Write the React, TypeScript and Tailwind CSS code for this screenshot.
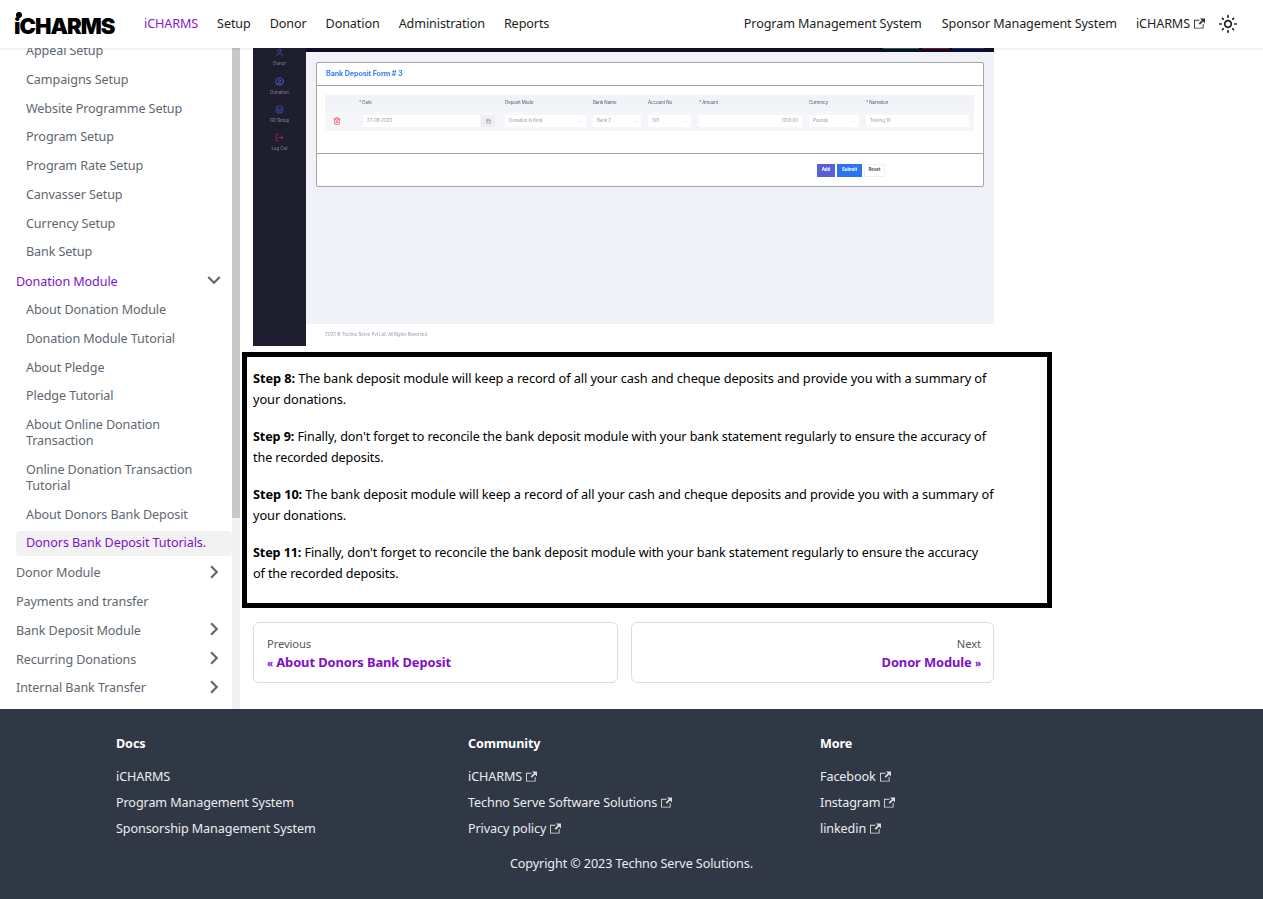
import { Calendar, ChevronDown, CircleUser, Layers, LogOut, Trash2, User } from "lucide-react";

const ExternalIcon = ({ className = "" }: { className?: string }) => (
  <svg viewBox="0 0 24 24" className={`w-[11px] h-[11px] inline-block ml-[4px] -mt-[2px] fill-current opacity-90 ${className}`}>
    <path d="M21 13v10h-21v-19h12v2h-10v15h17v-8h2zm3-12h-10.988l4.035 4-6.977 7.07 2.828 2.828 6.977-7.07 4.125 4.172v-11z" />
  </svg>
);

const SunIcon = () => (
  <svg viewBox="0 0 24 24" className="w-5 h-5 fill-[#1c1e21]">
    <path d="M12,9c1.65,0,3,1.35,3,3s-1.35,3-3,3s-3-1.35-3-3S10.35,9,12,9 M12,7c-2.76,0-5,2.24-5,5s2.24,5,5,5s5-2.24,5-5 S14.76,7,12,7L12,7z M2,13l2,0c0.55,0,1-0.45,1-1s-0.45-1-1-1l-2,0c-0.55,0-1,0.45-1,1S1.45,13,2,13z M20,13l2,0c0.55,0,1-0.45,1-1 s-0.45-1-1-1l-2,0c-0.55,0-1,0.45-1,1S19.45,13,20,13z M11,2v2c0,0.55,0.45,1,1,1s1-0.45,1-1V2c0-0.55-0.45-1-1-1S11,1.45,11,2z M11,20v2c0,0.55,0.45,1,1,1s1-0.45,1-1v-2c0-0.55-0.45-1-1-1C11.45,19,11,19.45,11,20z M5.99,4.58c-0.39-0.39-1.03-0.39-1.41,0 c-0.39,0.39-0.39,1.03,0,1.41l1.06,1.06c0.39,0.39,1.03,0.39,1.41,0s0.39-1.03,0-1.41L5.99,4.58z M18.36,16.95 c-0.39-0.39-1.03-0.39-1.41,0c-0.39,0.39-0.39,1.03,0,1.41l1.06,1.06c0.39,0.39,1.03,0.39,1.41,0c0.39-0.39,0.39-1.03,0-1.41 L18.36,16.95z M19.42,5.99c0.39-0.39,0.39-1.03,0-1.41c-0.39-0.39-1.03-0.39-1.41,0l-1.06,1.06c-0.39,0.39-0.39,1.03,0,1.41 s1.03,0.39,1.41,0L19.42,5.99z M7.05,18.36c0.39-0.39,0.39-1.03,0-1.41c-0.39-0.39-1.03-0.39-1.41,0l-1.06,1.06 c-0.39,0.39-0.39,1.03,0,1.41s1.03,0.39,1.41,0L7.05,18.36z" />
  </svg>
);

const Chevron = ({ down = false }: { down?: boolean }) => (
  <svg viewBox="0 0 24 24" className={`w-[26px] h-[26px] fill-[#65676b] ${down ? "rotate-180" : "rotate-90"}`}>
    <path d="M7.41 15.41L12 10.83l4.59 4.58L18 14l-6-6-6 6z" />
  </svg>
);

const sidebarTop = [
  "Appeal Setup",
  "Campaigns Setup",
  "Website Programme Setup",
  "Program Setup",
  "Program Rate Setup",
  "Canvasser Setup",
  "Currency Setup",
  "Bank Setup",
];

const donationLinks = [
  "About Donation Module",
  "Donation Module Tutorial",
  "About Pledge",
  "Pledge Tutorial",
  "About Online Donation Transaction",
  "Online Donation Transaction Tutorial",
  "About Donors Bank Deposit",
];

const SubLink = ({ label, active = false }: { label: string; active?: boolean }) => (
  <div
    className={`mt-[3.2px] pl-[10px] pr-3 py-[4.8px] leading-4 rounded ${
      active ? "bg-[#f2f2f2] text-[#7e10c9]" : "text-[#606770]"
    }`}
  >
    {label}
  </div>
);

const Category = ({ label, chevron = true }: { label?: string; chevron?: boolean }) => (
  <div className="mt-[3.2px] h-[25.6px] flex items-center justify-between text-[#606770]">
    <span className="pt-[3px]">{label}</span>
    {chevron && (
      <span className="mr-[5px] mb-[1px]">
        <Chevron />
      </span>
    )}
  </div>
);

const Sidebar = () => (
  <aside className="w-[240px] h-full flex shrink-0 overflow-hidden">
    <div className="w-[232px] h-full overflow-hidden pl-4">
      <div className="-mt-[13px]">
        {sidebarTop.map((s) => (
          <SubLink key={s} label={s} />
        ))}
        <div className="mt-[3.2px] h-[25.6px] flex items-center justify-between text-[#7e10c9]">
          <span className="pt-[3px]">Donation Module</span>
          <span className="mr-[5px] mb-[2px]">
            <Chevron down />
          </span>
        </div>
        {donationLinks.map((s) => (
          <SubLink key={s} label={s} />
        ))}
        <SubLink label="Donors Bank Deposit Tutorials." active />
        <Category label="Donor Module" />
        <Category label="Payments and transfer" chevron={false} />
        <Category label="Bank Deposit Module" />
        <Category label="Recurring Donations" />
        <Category label="Internal Bank Transfer" />
        <Category />
      </div>
    </div>
    <div className="w-2 h-full bg-[#f1f1f1]">
      <div className="h-[470px] bg-[#c8c8c8]" />
    </div>
  </aside>
);

const FormSelect = ({ text, mr, kind = "select" }: { text: string; mr: string; kind?: "select" | "input" | "amount" }) => (
  <div className={`${mr} h-[12px] bg-white rounded-[1px] flex items-center justify-between px-[4px] text-[#9a9aa5]`}>
    <span className={kind === "amount" ? "ml-auto" : ""}>{text}</span>
    {kind === "select" && <ChevronDown className="w-[3px] h-[3px]" />}
  </div>
);

const columns = "grid grid-cols-[34px_146px_88px_55px_51px_110px_57px_108px]";

// the screenshot inside the article
const DepositShot = () => (
  <div className="w-[741px] h-[298px] flex flex-col bg-white font-['Inter',sans-serif] blur-[0.3px]">
    <div className="flex flex-1">
      <div className="w-[54px] bg-[#1e1e2e] flex flex-col items-center text-[4.5px] text-[#8c8c9c]">
        <User className="w-[9px] h-[9px] text-[#4a4fc4]" />
        <span className="mt-[3px] leading-[7px]">Donor</span>
        <CircleUser className="w-[9px] h-[9px] text-[#5560e0] mt-[9.5px]" />
        <span className="mt-[3px] leading-[7px]">Donation</span>
        <Layers className="w-[9px] h-[9px] text-[#4a55d0] mt-[9.5px]" />
        <span className="mt-[3px] leading-[7px]">GD Setup</span>
        <LogOut className="w-[9px] h-[9px] text-[#b8285c] mt-[9px]" />
        <span className="mt-[3px] leading-[7px]">Log Out</span>
      </div>
      <div className="flex-1 flex flex-col">
        <div className="h-1 shrink-0 bg-[#100e24] flex justify-end pr-[10px] gap-[3px]">
          <div className="w-9 h-[1px] bg-[#1c6b5c]" />
          <div className="w-[27px] h-[1px] bg-[#7a1f3d]" />
          <div className="w-8 h-[1px] bg-[#23308a]" />
        </div>
        <div className="h-[272px] bg-[#f0f2f8] pt-[10px] pl-[10px] pr-[10px]">
          <div className="w-[668px] h-[125px] bg-white border border-[#a5a5a8] rounded-[2px] flex flex-col">
            <div className="h-[23px] border-b border-[#a5a5a8] pl-[9px] flex items-center text-[7.2px] font-bold text-[#3b82f6]">
              Bank Deposit Form # 3
            </div>
            <div className="h-[68px] border-b border-[#a5a5a8] pt-[9px] pl-[8px] text-[4.5px]">
              <div className={`${columns} w-[649px] h-[16px] bg-[#f2f3f8] items-center text-[#55555f]`}>
                <span />
                <span>* Date</span>
                <span>Deposit Mode</span>
                <span>Bank Name</span>
                <span>Account No</span>
                <span>* Amount</span>
                <span>Currency</span>
                <span>* Narration</span>
              </div>
              <div className={`${columns} w-[649px] h-[20px] bg-[#f5f6fa] items-center`}>
                <Trash2 className="w-2 h-2 ml-2 text-[#ef3a4a]" />
                <div className="flex ml-1 gap-[1px]">
                  <div className="w-[117px] h-[12px] bg-white flex items-center px-[4px] text-[#9a9aa5]">27-09-2023</div>
                  <div className="w-[14px] h-[12px] bg-[#eeeff3] flex items-center justify-center">
                    <Calendar className="w-[5px] h-[5px] text-[#777]" />
                  </div>
                </div>
                <FormSelect text="Donation In Kind" mr="mr-[7px]" />
                <FormSelect text="Bank 2" mr="mr-[7px]" />
                <FormSelect text="301" mr="mr-2" />
                <FormSelect text="1200.00" mr="mr-[7px]" kind="amount" />
                <FormSelect text="Pounds" mr="mr-[7px]" />
                <FormSelect text="Testing 10" mr="mr-[5px]" kind="input" />
              </div>
            </div>
            <div className="flex-1 flex items-center justify-end pr-[98px] gap-[1px] text-[4.5px] font-bold">
              <div className="w-[18px] h-[13px] bg-[#5a5fd6] text-white flex items-center justify-center">Add</div>
              <div className="w-[25px] h-[13px] ml-[1px] bg-[#2b74f0] text-white flex items-center justify-center">Submit</div>
              <div className="w-[21px] h-[13px] ml-[1px] bg-white border border-[#f0f0f0] text-[#555] flex items-center justify-center">Reset</div>
            </div>
          </div>
        </div>
        <div className="flex-1 flex items-center pl-[19px] text-[4.5px] text-[#9a9aa5]">
          2023 © Techno Serve Pvt Ltd. All Rights Reserved
        </div>
      </div>
    </div>
  </div>
);

// sizes differ per step so the lines break where the picture breaks them
const steps = [
  ["Step 8:", "The bank deposit module will keep a record of all your cash and cheque deposits and provide you with a summary of your donations.", "text-[12.8px]"],
  ["Step 9:", "Finally, don't forget to reconcile the bank deposit module with your bank statement regularly to ensure the accuracy of the recorded deposits.", "text-[12.6px]"],
  ["Step 10:", "The bank deposit module will keep a record of all your cash and cheque deposits and provide you with a summary of your donations.", "text-[12.8px]"],
  ["Step 11:", "Finally, don't forget to reconcile the bank deposit module with your bank statement regularly to ensure the accuracy of the recorded deposits.", "text-[12.6px] max-w-[730px]"],
];

const footerCols = [
  { x: "Docs", links: [["iCHARMS", false], ["Program Management System", false], ["Sponsorship Management System", false]] },
  { x: "Community", links: [["iCHARMS", true], ["Techno Serve Software Solutions", true], ["Privacy policy", true]] },
  { x: "More", links: [["Facebook", true], ["Instagram", true], ["linkedin", true]] },
] as const;

export default function App() {
  return (
    <div className="w-[1263px] h-[899px] overflow-hidden flex flex-col bg-white text-[12.6px] tracking-[-0.1px] text-[#1c1e21] font-['Noto_Sans',sans-serif]">
      {/* Navbar */}
      <header className="h-12 shrink-0 relative z-10 bg-white shadow-[0_1px_2px_rgba(0,0,0,0.1)] flex items-center pl-[14px] pr-[25px]">
        <div className="relative w-[101px] font-['Inter',sans-serif] font-black text-[22px] leading-none tracking-[-1px] text-black mt-[4px]">
          iCHARMS
          <span className="absolute left-[2px] -top-[3px] w-[6px] h-[6px] rounded-full bg-black" />
        </div>
        <nav className="ml-[29px] flex gap-[19px]">
          <span className="text-[#8a14d8]">iCHARMS</span>
          <span>Setup</span>
          <span>Donor</span>
          <span>Donation</span>
          <span>Administration</span>
          <span>Reports</span>
        </nav>
        <div className="ml-auto flex items-center">
          <span>Program Management System</span>
          <span className="ml-5">Sponsor Management System</span>
          <span className="ml-[19px]">
            iCHARMS
            <ExternalIcon className="opacity-80" />
          </span>
          <span className="ml-[13px]">
            <SunIcon />
          </span>
        </div>
      </header>

      <div className="flex flex-1 min-h-0">
        <Sidebar />
        <main className="flex-1 min-w-0 pl-[13px]">
          <DepositShot />
          <div className="-ml-[11px] mt-[6px] w-[810px] h-[256px] border-[5px] border-black pl-[6px] pt-[11px]">
            <div className="w-[741px]">
              {steps.map(([label, text, size]) => (
                <p key={label} className={`mb-4 leading-[21px] text-black ${size}`}>
                  <b>{label}</b> {text}
                </p>
              ))}
            </div>
          </div>
          <div className="mt-[14px] w-[741px] flex gap-[13px]">
            <div className="flex-1 h-[61px] border border-[#dadde1] rounded-md px-[13px] pt-[12px]">
              <div className="text-[11.2px] leading-[18px] text-[#525860]">Previous</div>
              <div className="font-bold text-[12.9px] leading-[19px] text-[#7e10c9]">
                <span className="text-[10px]">«</span> About Donors Bank Deposit
              </div>
            </div>
            <div className="flex-1 h-[61px] border border-[#dadde1] rounded-md pl-[13px] pr-3 pt-[12px] text-right">
              <div className="text-[11.2px] leading-[18px] text-[#525860]">Next</div>
              <div className="font-bold text-[12.9px] leading-[19px] text-[#7e10c9]">
                Donor Module <span className="text-[10px]">»</span>
              </div>
            </div>
          </div>
        </main>
      </div>

      {/* Footer */}
      <footer className="h-[190px] shrink-0 bg-[#303846] text-[#ebedf0] pt-[25px] pl-[116px]">
        <div className="flex">
          {footerCols.map((col) => (
            <div key={col.x} className="w-[352px]">
              <div className="font-bold text-white leading-5 mb-[10px]">{col.x}</div>
              {col.links.map(([label, ext]) => (
                <div key={label} className="h-[26px] flex items-center">
                  {label}
                  {ext && <ExternalIcon />}
                </div>
              ))}
            </div>
          ))}
        </div>
        <div className="mt-3 -ml-[116px] text-center leading-5">Copyright © 2023 Techno Serve Solutions.</div>
      </footer>
    </div>
  );
}
